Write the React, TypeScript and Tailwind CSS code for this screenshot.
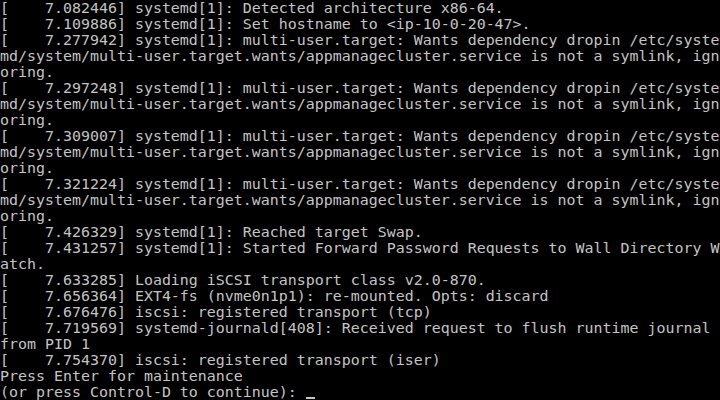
const lines = [
  "[    7.082446] systemd[1]: Detected architecture x86-64.",
  "[    7.109886] systemd[1]: Set hostname to <ip-10-0-20-47>.",
  "[    7.277942] systemd[1]: multi-user.target: Wants dependency dropin /etc/syste",
  "md/system/multi-user.target.wants/appmanagecluster.service is not a symlink, ign",
  "oring.",
  "[    7.297248] systemd[1]: multi-user.target: Wants dependency dropin /etc/syste",
  "md/system/multi-user.target.wants/appmanagecluster.service is not a symlink, ign",
  "oring.",
  "[    7.309007] systemd[1]: multi-user.target: Wants dependency dropin /etc/syste",
  "md/system/multi-user.target.wants/appmanagecluster.service is not a symlink, ign",
  "oring.",
  "[    7.321224] systemd[1]: multi-user.target: Wants dependency dropin /etc/syste",
  "md/system/multi-user.target.wants/appmanagecluster.service is not a symlink, ign",
  "oring.",
  "[    7.426329] systemd[1]: Reached target Swap.",
  "[    7.431257] systemd[1]: Started Forward Password Requests to Wall Directory W",
  "atch.",
  "[    7.633285] Loading iSCSI transport class v2.0-870.",
  "[    7.656364] EXT4-fs (nvme0n1p1): re-mounted. Opts: discard",
  "[    7.676476] iscsi: registered transport (tcp)",
  "[    7.719569] systemd-journald[408]: Received request to flush runtime journal",
  "from PID 1",
  "[    7.754370] iscsi: registered transport (iser)",
  "Press Enter for maintenance",
]

export default function App() {
  return (
    <div className="w-[720px] h-[400px] overflow-hidden bg-black text-[#c4c4c4] font-['DejaVu_Sans_Mono',monospace] text-[14.95px] leading-[16px]">
      {lines.map((line, i) => (
        <div key={i} className="h-4 whitespace-pre">
          {line}
        </div>
      ))}
      <div className="h-4 whitespace-pre flex">
        <span>(or press Control-D to continue): </span>
        <span className="w-[9px] h-4 flex flex-col justify-end pb-[1px]">
          <span className="block h-[2px] w-[9px] bg-[#c4c4c4]" />
        </span>
      </div>
    </div>
  )
}
